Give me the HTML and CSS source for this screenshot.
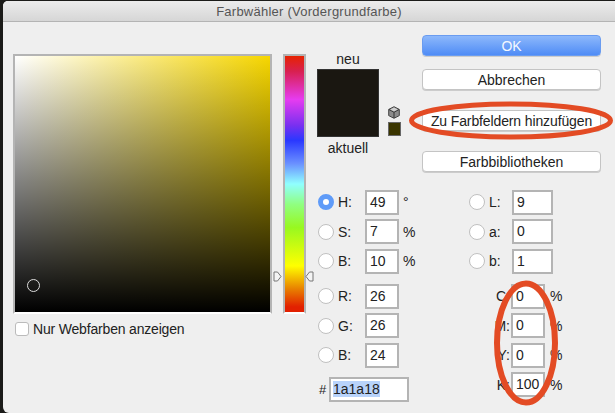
FILE: index.html
```html
<!DOCTYPE html>
<html lang="de">
<head>
  <meta charset="UTF-8">
  <title>Farbwähler</title>
  <link rel="stylesheet" href="styles.css">
</head>
<body>
  <div class="window">
    <div class="titlebar">Farbwähler (Vordergrundfarbe)</div>
    <div class="content">
      <div class="picker-col">
        <div class="field-square">
          <span class="cursor"></span>
        </div>
        <label class="webcolors"><span class="checkbox"></span>Nur Webfarben anzeigen</label>
      </div>

      <div class="hue-col">
        <div class="hue-bar"></div>
        <svg class="marker marker-left" width="9" height="11" viewBox="0 0 9 11"><path d="M1 1H4.5L8 5.5L4.5 10H1Z" fill="#f4f4f4" stroke="#777"/></svg>
        <svg class="marker marker-right" width="9" height="11" viewBox="0 0 9 11"><path d="M8 1H4.5L1 5.5L4.5 10H8Z" fill="#f4f4f4" stroke="#777"/></svg>
      </div>

      <div class="controls">
        <div class="top">
          <div class="preview">
            <div class="preview-label">neu</div>
            <div class="swatch-row">
              <div class="swatch"></div>
              <div class="gamut">
                <svg width="12" height="13" viewBox="0 0 12 13"><path d="M6 .7L11.3 3.4V9.6L6 12.3L.7 9.6V3.4Z" fill="#8c8c8c" stroke="#444"/><path d="M.9 3.5L6 6.2L11.1 3.5M6 6.2V12" fill="none" stroke="#333"/><path d="M6 1.6L9.8 3.5L6 5.4L2.2 3.5Z" fill="#cfcfcf"/></svg>
                <span class="gamut-color"></span>
              </div>
            </div>
            <div class="preview-label">aktuell</div>
          </div>
          <div class="buttons">
            <button class="btn btn-ok">OK</button>
            <button class="btn">Abbrechen</button>
            <button class="btn btn-add">Zu Farbfeldern hinzufügen</button>
            <button class="btn">Farbbibliotheken</button>
          </div>
        </div>

        <div class="fields">
          <div class="fields-left">
            <div class="row"><span class="radio radio-on"></span><span class="name">H:</span><span class="input">49</span><span class="unit">°</span></div>
            <div class="row"><span class="radio"></span><span class="name">S:</span><span class="input">7</span><span class="unit">%</span></div>
            <div class="row group-end"><span class="radio"></span><span class="name">B:</span><span class="input">10</span><span class="unit">%</span></div>
            <div class="row"><span class="radio"></span><span class="name">R:</span><span class="input">26</span></div>
            <div class="row"><span class="radio"></span><span class="name">G:</span><span class="input">26</span></div>
            <div class="row group-end"><span class="radio"></span><span class="name">B:</span><span class="input">24</span></div>
            <div class="row hex-row"><span class="hash">#</span><span class="input input-hex"><span class="selected">1a1a18</span></span></div>
          </div>
          <div class="fields-right">
            <div class="row"><span class="radio"></span><span class="name">L:</span><span class="input input-lab">9</span></div>
            <div class="row"><span class="radio"></span><span class="name">a:</span><span class="input input-lab">0</span></div>
            <div class="row group-end"><span class="radio"></span><span class="name">b:</span><span class="input input-lab">1</span></div>
            <div class="row cmyk"><span class="name">C:</span><span class="input">0</span><span class="unit">%</span></div>
            <div class="row cmyk"><span class="name">M:</span><span class="input">0</span><span class="unit">%</span></div>
            <div class="row cmyk"><span class="name">Y:</span><span class="input">0</span><span class="unit">%</span></div>
            <div class="row cmyk"><span class="name">K:</span><span class="input">100</span><span class="unit">%</span></div>
          </div>
        </div>
      </div>
    </div>
  </div>

  <!-- red hand-drawn rings on top of the dialog -->
  <svg class="rings" width="615" height="413" viewBox="0 0 615 413">
    <ellipse cx="511" cy="120.500" rx="99.500" ry="16.500" fill="none" stroke="#e34b24" stroke-width="5"/>
    <ellipse cx="526" cy="343" rx="29" ry="59.500" fill="none" stroke="#e34b24" stroke-width="6"/>
  </svg>
</body>
</html>
```

FILE: styles.css
```css
* {
  box-sizing: border-box;
}
html, body {
  margin: 0;
  padding: 0;
}
body {
  width: 615px;
  height: 413px;
  overflow: hidden;
  background-color: #1b1b19;
  font-family: 'Liberation Sans', Arial, sans-serif;
  font-size: 14px;
  color: #222;
  position: relative;
}
.window {
  margin: 1px 0 0 3px;
  height: 412px;
  background-color: #efefef;
  border-radius: 5px 0 0 6px;
  overflow: hidden;
}
.titlebar {
  height: 21px;
  padding-top: 3px;
  text-align: center;
  font-size: 13px;
  letter-spacing: 0.25px;
  color: #555;
  background: linear-gradient(to bottom, #ececec, #d6d6d6);
  border-bottom: 1px solid #b4b4b4;
}
.content {
  display: flex;
  align-items: flex-start;
}
.picker-col {
  width: 259px;
  margin: 32px 0 0 10px;
}
.field-square {
  position: relative;
  width: 259px;
  height: 260px;
  border: 2px solid #b4b4b4;
  border-bottom: 2px solid #fff;
  background:
    linear-gradient(to bottom, rgba(0, 0, 0, 0), #000),
    linear-gradient(to right, #fff, #f6d600);
}
.cursor {
  position: absolute;
  left: 12px;
  top: 223px;
  width: 13px;
  height: 13px;
  border: 1.5px solid #ddd;
  border-radius: 50%;
}
.webcolors {
  display: flex;
  align-items: center;
  margin: 7px 0 0 2px;
  line-height: 16px;
  letter-spacing: -0.18px;
}
.checkbox {
  width: 14px;
  height: 14px;
  margin-right: 4px;
  background-color: #fff;
  border: 1px solid #bbb;
  border-radius: 3px;
}
.hue-col {
  position: relative;
  width: 23px;
  margin: 32px 0 0 11px;
}
.hue-bar {
  height: 260px;
  border: 2px solid #b4b4b4;
  border-bottom: 2px solid #fff;
  background: linear-gradient(to bottom, #e62200 0, #d82050 6%, #e63cf0 17%, #7a30f0 27%, #2a38ff 33%, #6a90ff 42%, #90ffff 50%, #90ff80 58%, #98f820 67%, #ffff00 82%, #e88000 91%, #e22000 98%);
}
.marker {
  position: absolute;
  top: 217px;
}
.marker-left {
  left: -10px;
}
.marker-right {
  right: -8px;
}
.controls {
  width: 284px;
  margin: 13px 0 0 11px;
}
.top {
  display: flex;
  height: 155px;
}
.preview {
  width: 105px;
  padding-top: 16px;
}
.preview-label {
  width: 62px;
  text-align: center;
  line-height: 16px;
}
.swatch-row {
  display: flex;
  align-items: flex-end;
  margin: 2px 0 3px;
}
.swatch {
  width: 62px;
  height: 68px;
  background-color: #1a1711;
  border: 1px solid #333;
}
.gamut {
  display: flex;
  flex-direction: column;
  gap: 3px;
  margin: 0 0 1px 9px;
}
.gamut-color {
  width: 13px;
  height: 14px;
  background-color: #3a3500;
  border: 1.5px solid #666;
}
.buttons {
  display: flex;
  flex-direction: column;
  width: 179px;
}
.btn {
  height: 21px;
  margin-bottom: 13px;
  padding: 0;
  font: 14px 'Liberation Sans', Arial, sans-serif;
  color: #222;
  background-color: #fff;
  border: 1px solid #c4c4c4;
  border-radius: 4px;
  box-shadow: 0 1px 0 #ccc;
}
.btn-ok {
  color: #f4f8ff;
  background: linear-gradient(to bottom, #8db8fb, #4f8cf6);
  border-color: #6a9cf0;
}
.btn-add {
  margin: 7px 0 20px;
  letter-spacing: -0.12px;
}
.fields {
  display: flex;
}
.fields-left {
  width: 150px;
}
.row {
  display: flex;
  align-items: center;
  height: 24.6px;
  margin-bottom: 5px;
}
.group-end {
  margin-bottom: 10px;
}
.radio {
  width: 16px;
  height: 16px;
  margin: 0 4px 0 1px;
  background-color: #fff;
  border: 1px solid #c0c0c0;
  border-radius: 50%;
}
.radio-on {
  background-color: #fff;
  border: 5px solid #5f9bf8;
}
.name {
  width: 27px;
}
.input {
  width: 34px;
  height: 25px;
  padding-left: 3px;
  line-height: 21px;
  background-color: #fff;
  border: 2px solid #b4b4b4;
}
.input-lab {
  width: 41px;
}
.unit {
  margin-left: 4px;
}
.hex-row {
  margin: -0.6px 0 0 2px;
}
.hash {
  width: 7px;
  margin: 0 3px 0 0;
  font-size: 13px;
}
.input-hex {
  width: 80px;
  padding-left: 2px;
}
.selected {
  display: inline-block;
  line-height: 16px;
  background-color: #b8d3fb;
}
.fields-right {
  width: 100px;
  margin-left: 1px;
}
.fields-right .name {
  width: 23px;
}
.cmyk .name {
  width: 43px;
  text-align: right;
  padding-right: 1px;
}
.cmyk .unit {
  margin-left: 5px;
}
.rings {
  position: absolute;
  left: 0;
  top: 0;
  pointer-events: none;
}
```
